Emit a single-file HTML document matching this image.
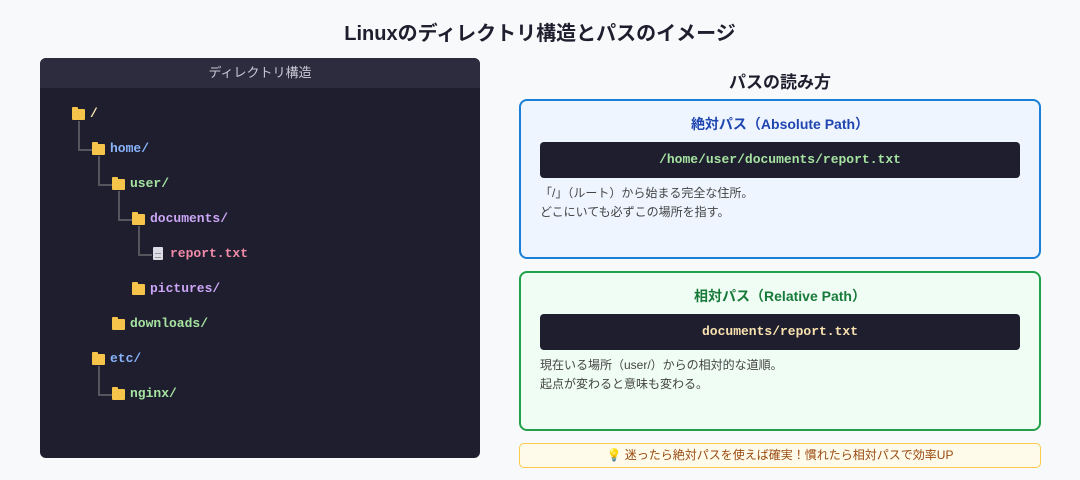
<!DOCTYPE html>
<html><head><meta charset="utf-8"><style>
*{margin:0;padding:0;box-sizing:border-box}
body{width:1080px;height:480px;background:#f8f9fb;font-family:"Liberation Sans","Noto Sans CJK JP",sans-serif;position:relative;overflow:hidden}
h1{position:absolute;top:17px;left:0;width:1080px;text-align:center;font-size:20px;font-weight:bold;color:#1e1e2e}
.panel{position:absolute;left:40px;top:58px;width:440px;height:400px;background:#1e1e2e;border-radius:6px;overflow:hidden}
.ph{height:30px;background:#2c2c3e;color:#c8c8d4;font-size:13px;text-align:center;line-height:30px}
.row{position:absolute;font-family:"Liberation Mono",monospace;font-weight:bold;font-size:13px;height:16px;line-height:16px}
.fd{position:absolute;width:13px;height:11px;background:#f6c44a;border-radius:1px;top:3px}
.fd:before{content:"";position:absolute;left:0;top:-2px;width:6px;height:3px;background:#f6c44a;border-radius:1px 1px 0 0}
.fl{position:absolute;width:10px;height:13px;background:#dcdce6;top:1px;border-radius:1px}
.fl:after{content:"";position:absolute;left:2px;top:6px;width:6px;height:3px;border-top:1px solid #999;border-bottom:1px solid #999}
.t{position:absolute;left:18px;white-space:nowrap}
.v{position:absolute;width:2px;background:#55555e}
.h{position:absolute;height:2px;background:#55555e}
h2{position:absolute;left:520px;width:520px;top:68px;text-align:center;font-size:17px;font-weight:bold;color:#1e1e2e}
.card{position:absolute;left:519px;width:522px;border-radius:8px;border:2px solid}
.card .ti{text-align:center;font-size:14px;font-weight:bold;margin-top:13px}
.code{margin:8px 19px 0;height:36px;background:#1e1e2e;border-radius:4px;text-align:center;line-height:36px;font-family:"Liberation Mono",monospace;font-weight:bold;font-size:13px}
.desc{margin:6px 19px 0;font-size:12px;color:#444;line-height:19px}
.tip{position:absolute;left:519px;top:443px;width:522px;height:25px;border:1.5px solid #fcc94a;background:#fffbea;border-radius:5px;text-align:center;font-size:12px;line-height:22px;color:#9a4a10}
</style></head><body>
<h1>Linuxのディレクトリ構造とパスのイメージ</h1>
<div class="panel"><div class="ph">ディレクトリ構造</div>
<div class="v" style="left:38px;top:63px;height:30px"></div><div class="h" style="left:38px;top:91px;width:14px"></div>
<div class="v" style="left:58px;top:98px;height:30px"></div><div class="h" style="left:58px;top:126px;width:14px"></div>
<div class="v" style="left:78px;top:133px;height:30px"></div><div class="h" style="left:78px;top:161px;width:14px"></div>
<div class="v" style="left:98px;top:168px;height:30px"></div><div class="h" style="left:98px;top:196px;width:14px"></div>
<div class="v" style="left:58px;top:308px;height:30px"></div><div class="h" style="left:58px;top:336px;width:14px"></div>
<div class="row" style="left:32px;top:48px"><div class="fd"></div><span class="t" style="color:#f9e2af">/</span></div>
<div class="row" style="left:52px;top:83px"><div class="fd"></div><span class="t" style="color:#89b4fa">home/</span></div>
<div class="row" style="left:72px;top:118px"><div class="fd"></div><span class="t" style="color:#a6e3a1">user/</span></div>
<div class="row" style="left:92px;top:153px"><div class="fd"></div><span class="t" style="color:#cba6f7">documents/</span></div>
<div class="row" style="left:113px;top:188px"><div class="fl"></div><span class="t" style="left:17px;color:#f38ba8">report.txt</span></div>
<div class="row" style="left:92px;top:223px"><div class="fd"></div><span class="t" style="color:#cba6f7">pictures/</span></div>
<div class="row" style="left:72px;top:258px"><div class="fd"></div><span class="t" style="color:#a6e3a1">downloads/</span></div>
<div class="row" style="left:52px;top:293px"><div class="fd"></div><span class="t" style="color:#89b4fa">etc/</span></div>
<div class="row" style="left:72px;top:328px"><div class="fd"></div><span class="t" style="color:#a6e3a1">nginx/</span></div>
</div>
<h2>パスの読み方</h2>
<div class="card" style="top:99px;height:160px;border-color:#1a7fd6;background:#eef5ff">
<div class="ti" style="color:#1e45b0">絶対パス（Absolute Path）</div>
<div class="code" style="color:#a6e3a1">/home/user/documents/report.txt</div>
<div class="desc">「/」（ルート）から始まる完全な住所。<br>どこにいても必ずこの場所を指す。</div></div>
<div class="card" style="top:271px;height:160px;border-color:#22a04a;background:#effdf4">
<div class="ti" style="color:#187a3a">相対パス（Relative Path）</div>
<div class="code" style="color:#f9e2af">documents/report.txt</div>
<div class="desc">現在いる場所（user/）からの相対的な道順。<br>起点が変わると意味も変わる。</div></div>
<div class="tip">💡 迷ったら絶対パスを使えば確実！慣れたら相対パスで効率UP</div>
</body></html>
